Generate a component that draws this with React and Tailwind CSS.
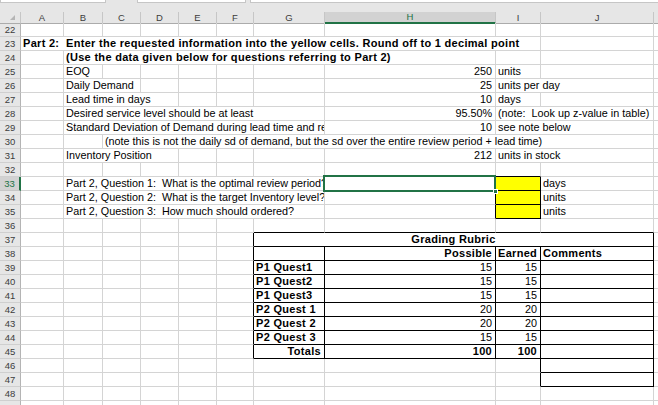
import React from 'react';

const SPAN = {
  1: 'col-span-1', 2: 'col-span-2', 3: 'col-span-3', 4: 'col-span-4', 5: 'col-span-5',
  6: 'col-span-6', 7: 'col-span-7', 8: 'col-span-8', 9: 'col-span-9', 10: 'col-span-10',
};

const COLS = 'grid grid-cols-[21px_43px_39px_38px_38px_38px_37px_71px_171px_45px_113px_1fr]';

const rows = [
  { n: 22, cells: [] },
  { n: 23, cells: [{ s: 0, e: 8, t: 'Part 2:  Enter the requested information into the yellow cells. Round off to 1 decimal point', b: 1 }] },
  { n: 24, cells: [{ s: 1, e: 7, t: '(Use the data given below for questions referring to Part 2)', b: 1 }] },
  { n: 25, cells: [{ s: 1, t: 'EOQ' }, { s: 7, t: '250', a: 'r' }, { s: 8, t: 'units' }] },
  { n: 26, cells: [{ s: 1, e: 2, t: 'Daily Demand' }, { s: 7, t: '25', a: 'r' }, { s: 8, e: 9, t: 'units per day' }] },
  { n: 27, cells: [{ s: 1, e: 3, t: 'Lead time in days' }, { s: 7, t: '10', a: 'r' }, { s: 8, t: 'days' }] },
  { n: 28, cells: [{ s: 1, e: 6, t: 'Desired service level should be at least' }, { s: 7, t: '95.50%', a: 'r' }, { s: 8, e: 9, t: '(note:  Look up z-value in table)' }] },
  { n: 29, cells: [{ s: 1, e: 6, t: 'Standard Deviation of Demand during lead time and re' }, { s: 7, t: '10', a: 'r' }, { s: 8, e: 9, t: 'see note below' }] },
  { n: 30, cells: [{ s: 2, e: 9, t: '(note this is not the daily sd of demand, but the sd over the entire review period + lead time)' }] },
  { n: 31, cells: [{ s: 1, e: 3, t: 'Inventory Position' }, { s: 7, t: '212', a: 'r' }, { s: 8, e: 9, t: 'units in stock' }] },
  { n: 32, cells: [{ s: 8, bb: 1 }] },
  { n: 33, cells: [{ s: 1, e: 6, t: 'Part 2, Question 1:  What is the optimal review period?' }, { s: 7, rb: 1, sel: 1 }, { s: 8, y: 1, rb: 1, bb: 1 }, { s: 9, t: 'days' }] },
  { n: 34, cells: [{ s: 1, e: 6, t: 'Part 2, Question 2:  What is the target Inventory level?' }, { s: 7, rb: 1 }, { s: 8, y: 1, rb: 1, bb: 1 }, { s: 9, t: 'units' }] },
  { n: 35, cells: [{ s: 1, e: 6, t: 'Part 2, Question 3:  How much should ordered?' }, { s: 7, rb: 1 }, { s: 8, y: 1, rb: 1, bb: 1 }, { s: 9, t: 'units' }] },
  { n: 36, cells: [{ s: 6, bb: 1 }, { s: 7, bb: 1 }, { s: 8, bb: 1 }, { s: 9, bb: 1 }] },
  { n: 37, cells: [{ s: 5, rb: 1 }, { s: 6, e: 9, t: 'Grading Rubric', b: 1, a: 'c', rb: 1, bb: 1 }] },
  { n: 38, cells: [{ s: 5, rb: 1 }, { s: 6, rb: 1, bb: 1 }, { s: 7, t: 'Possible', a: 'r', b: 1, rb: 1, bb: 1 }, { s: 8, t: 'Earned', a: 'r', b: 1, rb: 1, bb: 1 }, { s: 9, t: 'Comments', b: 1, rb: 1, bb: 1 }] },
  ...[
    ['P1 Quest1', '15', '15'],
    ['P1 Quest2', '15', '15'],
    ['P1 Quest3', '15', '15'],
    ['P2 Quest 1', '20', '20'],
    ['P2 Quest 2', '20', '20'],
    ['P2 Quest 3', '15', '15'],
  ].map((r, i) => ({
    n: 39 + i,
    cells: [
      { s: 5, rb: 1 },
      { s: 6, t: r[0], b: 1, rb: 1, bb: 1 },
      { s: 7, t: r[1], a: 'r', rb: 1, bb: 1 },
      { s: 8, t: r[2], a: 'r', rb: 1, bb: 1 },
      { s: 9, rb: 1, bb: 1 },
    ],
  })),
  { n: 45, cells: [{ s: 5, rb: 1 }, { s: 6, t: 'Totals', a: 'r', b: 1, rb: 1, bb: 1 }, { s: 7, t: '100', a: 'r', b: 1, rb: 1, bb: 1 }, { s: 8, t: '100', a: 'r', b: 1, rb: 1, bb: 1 }, { s: 9, rb: 1, bb: 1 }] },
  { n: 46, cells: [{ s: 8, rb: 1 }, { s: 9, rb: 1, bb: 1 }] },
  { n: 47, cells: [{ s: 8, rb: 1 }, { s: 9, rb: 1, bb: 1 }] },
  { n: 48, cells: [] },
  { n: 49, cells: [] },
];

function Cell({ c }) {
  const span = (c.e ?? c.s) - c.s + 1;
  const cls = [
    SPAN[span],
    'relative border-r border-b whitespace-pre leading-[13px] text-black',
    c.sel ? 'overflow-visible' : 'overflow-hidden',
    c.rb ? 'border-r-black' : 'border-r-[#d4d4d4]',
    c.bb ? 'border-b-black' : 'border-b-[#d4d4d4]',
    c.a === 'r' ? 'text-right pr-[3px] pl-[2px]' : c.a === 'c' ? 'text-center' : 'pl-[2px]',
    c.b ? 'text-[11px] font-bold tracking-[0.3px]' : 'text-[10.8px]',
    c.y ? 'bg-[#ffff00]' : '',
  ].join(' ');
  return (
    <div className={cls}>
      {c.t || ''}
      {c.sel ? (
        <div className="absolute left-[-2px] top-[-2px] right-[-1px] bottom-[-2px] z-10 border-2 border-[#217346]">
          <div className="absolute right-[-4px] bottom-[-4px] w-[5px] h-[5px] bg-[#217346] border border-white" />
        </div>
      ) : null}
    </div>
  );
}

function Row({ n, cells }) {
  const out = [];
  let c = 0;
  while (c < 10) {
    const spec = cells.find((x) => x.s === c);
    if (spec) {
      out.push(<Cell key={c} c={spec} />);
      c = (spec.e ?? spec.s) + 1;
    } else {
      out.push(<Cell key={c} c={{ s: c }} />);
      c += 1;
    }
  }
  const selected = n === 33;
  return (
    <>
      <div
        className={
          selected
            ? 'flex items-center justify-center bg-[#d2d2d2] text-[#217346] border-r-2 border-r-[#217346] border-b border-b-[#c6c6c6] text-[9.5px] leading-none'
            : 'flex items-center justify-center bg-[#e6e6e6] text-[#3c3c3c] border-r border-r-[#b4b4b4] border-b border-b-[#cfcfcf] text-[9.5px] leading-none'
        }
      >
        {n}
      </div>
      {out}
      <div className="border-b border-b-[#d4d4d4]" />
    </>
  );
}

const LETTERS = ['A', 'B', 'C', 'D', 'E', 'F', 'G', 'H', 'I', 'J'];

export default function App() {
  return (
    <div className="w-[658px] h-[405px] overflow-hidden bg-white font-['Liberation_Sans',Arial,sans-serif]">
      <div className="h-[12px] bg-[#e6e6e6] flex items-start">
        <div className="w-[106px] h-[3px] bg-white border border-t-0 border-[#c6c6c6]" />
        <div className="ml-[31px] w-[109px] h-[3px] bg-white border border-t-0 border-[#c6c6c6]" />
        <div className="ml-[4px] flex-1 h-[3px] bg-white border border-t-0 border-r-0 border-[#c6c6c6]" />
      </div>
      <div className={COLS + ' h-[11px]'}>
        <div className="relative bg-[#e6e6e6] border-r border-r-[#c6c6c6] border-b border-b-[#ababab]">
          <svg className="absolute left-[10px] top-[3px]" width="5" height="5" viewBox="0 0 5 5">
            <polygon points="5,0 5,5 0,5" fill="#b5b5b5" />
          </svg>
        </div>
        {LETTERS.map((l) =>
          l === 'H' ? (
            <div key={l} className="flex items-center justify-center bg-[#d2d2d2] text-[#217346] border-r border-r-[#c6c6c6] border-b-2 border-b-[#217346] text-[9.5px] leading-none">
              {l}
            </div>
          ) : (
            <div key={l} className="flex items-center justify-center bg-[#e6e6e6] text-[#3c3c3c] border-r border-r-[#c6c6c6] border-b border-b-[#ababab] text-[9.5px] leading-none">
              {l}
            </div>
          )
        )}
        <div className="bg-[#e6e6e6] border-b border-b-[#ababab]" />
      </div>
      <div className={COLS + ' auto-rows-[14px]'}>
        {rows.map((r) => (
          <Row key={r.n} n={r.n} cells={r.cells} />
        ))}
      </div>
    </div>
  );
}
